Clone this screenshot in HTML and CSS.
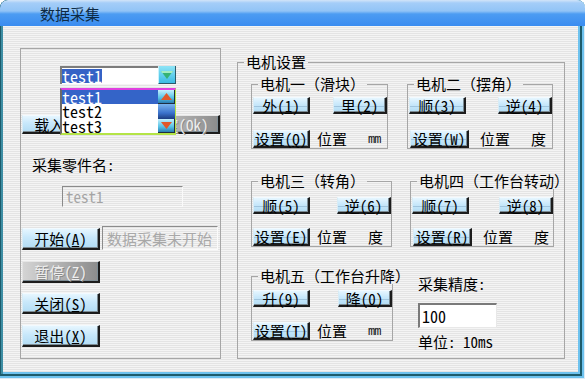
FILE: index.html
```
<!DOCTYPE html>
<html lang="zh-CN">
<head>
<meta charset="utf-8">
<title>数据采集</title>
<link rel="stylesheet" href="styles.css">
</head>
<body>
<div class="window">
  <div class="titlebar"><span class="title">数据采集</span></div>
  <div class="client">
    <div class="panel-left">
      <div class="combo">
        <div class="combo-field"><span class="sel">test1</span></div>
        <div class="combo-btn">
          <svg width="14" height="10" viewBox="0 0 14 10"><polygon points="1,1 13,1 7,9" fill="#36b274"/><polygon points="1,1 13,1 12,3 2,3" fill="#a4ecc0"/></svg>
        </div>
        <div class="dropdown">
          <ul class="items">
            <li class="on">test1</li>
            <li>test2</li>
            <li>test3</li>
          </ul>
          <div class="vscroll">
            <div class="sb-btn"><svg width="11" height="7" viewBox="0 0 11 7"><polygon points="5.5,0 11,7 0,7" fill="#e0582a"/></svg></div>
            <div class="sb-thumb"></div>
            <div class="sb-btn"><svg width="11" height="7" viewBox="0 0 11 7"><polygon points="0,0 11,0 5.5,7" fill="#e0582a"/></svg></div>
          </div>
        </div>
      </div>
      <div class="row-load">
        <button class="btn btn-l btn-load">载入(<u>L</u>)</button>
        <button class="btn btn-l btn-off btn-ok">确定(Ok)</button>
      </div>
      <div class="lbl-part">采集零件名:</div>
      <div class="field">test1</div>
      <div class="row-start">
        <button class="btn btn-l">开始(<u>A</u>)</button>
        <div class="status">数据采集未开始</div>
      </div>
      <button class="btn btn-l btn-off sp-pause">暂停(<u>Z</u>)</button>
      <button class="btn btn-l sp-close">关闭(<u>S</u>)</button>
      <button class="btn btn-l sp-exit">退出(<u>X</u>)</button>
    </div>

    <fieldset class="panel-right">
      <legend>电机设置</legend>
      <div class="motors">
        <div class="mrow r1">
          <fieldset class="motor g1">
            <legend>电机一（滑块）</legend>
            <div class="mb1"><button class="btn mbtn">外(<u>1</u>)</button><button class="btn mbtn rt">里(<u>2</u>)</button></div>
            <div class="mb2"><button class="btn mbtn set">设置(<u>Q</u>)</button><span class="pos">位置</span><span class="unit mm">mm</span></div>
          </fieldset>
          <fieldset class="motor g2 c2">
            <legend>电机二（摆角）</legend>
            <div class="mb1"><button class="btn mbtn">顺(<u>3</u>)</button><button class="btn mbtn rt">逆(<u>4</u>)</button></div>
            <div class="mb2"><button class="btn mbtn set">设置(<u>W</u>)</button><span class="pos">位置</span><span class="unit">度</span></div>
          </fieldset>
        </div>
        <div class="mrow r2">
          <fieldset class="motor g3">
            <legend>电机三（转角）</legend>
            <div class="mb1"><button class="btn mbtn">顺(<u>5</u>)</button><button class="btn mbtn rt">逆(<u>6</u>)</button></div>
            <div class="mb2"><button class="btn mbtn set">设置(<u>E</u>)</button><span class="pos">位置</span><span class="unit">度</span></div>
          </fieldset>
          <fieldset class="motor g4 c2">
            <legend>电机四（工作台转动）</legend>
            <div class="mb1"><button class="btn mbtn">顺(<u>7</u>)</button><button class="btn mbtn rt">逆(<u>8</u>)</button></div>
            <div class="mb2"><button class="btn mbtn set">设置(<u>R</u>)</button><span class="pos">位置</span><span class="unit">度</span></div>
          </fieldset>
        </div>
        <div class="mrow r3">
          <fieldset class="motor g5">
            <legend>电机五（工作台升降）</legend>
            <div class="mb1"><button class="btn mbtn">升(<u>9</u>)</button><button class="btn mbtn rt">降(<u>0</u>)</button></div>
            <div class="mb2"><button class="btn mbtn set">设置(<u>T</u>)</button><span class="pos">位置</span><span class="unit mm">mm</span></div>
          </fieldset>
          <div class="precision">
            <div class="p-label">采集精度:</div>
            <div class="p-input">100</div>
            <div class="p-unit">单位: 10ms</div>
          </div>
        </div>
      </div>
    </fieldset>
  </div>
</div>
</body>
</html>
```

FILE: styles.css
```
* { box-sizing: border-box; }
html, body { margin: 0; padding: 0; }
body {
  width: 585px;
  height: 379px;
  overflow: hidden;
  background: #ffffff;
  color: #000;
  font-family: "Noto Sans Mono CJK SC", "Noto Sans CJK SC", sans-serif;
  font-size: 15px;
  line-height: 1;
}

.window {
  width: 585px;
  height: 379px;
  display: flex;
  flex-direction: column;
  border-radius: 8px 8px 0 0;
  overflow: hidden;
  background: #6ec2ee;
  box-shadow:
    inset -1px -1px 0 #dcecf6,
    inset -3px -3px 0 #6ec2ee,
    inset -5px -5px 0 #1d5c6c,
    inset 1px 0 0 #1d5c6c,
    inset 3px 0 0 #3e8ea4;
}

.titlebar {
  flex: none;
  height: 26px;
  border-radius: 8px 8px 0 0;
  background: linear-gradient(#d2e4f8 0, #a4cdf8 3px, #92c4f6 11px, #4c9cf2 14px, #3a8cf0 100%);
  display: flex;
  align-items: center;
  padding-left: 40px;
}
.title {
  font-size: 15px;
  line-height: 16px;
  color: #0e2a44;
  margin-top: 1px;
}

.client {
  flex: none;
  width: 575px;
  height: 346px;
  margin-left: 3px;
  background: repeating-linear-gradient(to bottom, #f4f4f4 0, #f4f4f4 1px, #e4e4e4 1px, #e4e4e4 2px);
  display: flex;
  align-items: flex-start;
  padding: 22px 0 0 17px;
}

u { text-decoration: underline; text-underline-offset: 1px; }

/* ---------- buttons ---------- */
.btn {
  font: inherit;
  color: #000;
  margin: 0;
  padding: 0;
  display: flex;
  align-items: center;
  justify-content: center;
  white-space: nowrap;
  background: linear-gradient(#e6f6ff 0%, #c8e8fb 45%, #b2dcf4 100%);
  border: 0;
  border-left: 1px solid #d8ecf6;
  border-top: 1px solid #f2faff;
  border-right: 2px solid #1c1c1c;
  border-bottom: 2px solid #1c1c1c;
  box-shadow: inset -1px -1px 0 #7d8c94;
}
.btn-l { width: 78px; height: 22px; margin-left: 1px; flex: none; }
.btn-off {
  background: linear-gradient(to right, #d4d4d4, #8c8c8c);
  color: #eeeeee;
  text-shadow: 1px 1px 0 #8a8a8a;
  border-left-color: #e2e2e2;
  border-top-color: #e6e6e6;
}

/* ---------- left panel ---------- */
.panel-left {
  flex: none;
  width: 201px;
  height: 311px;
  border: 1px solid #a6a6a6;
  display: flex;
  flex-direction: column;
  align-items: flex-start;
}

.combo {
  position: relative;
  margin: 17px 0 0 39px;
  width: 116px;
  height: 18px;
  display: flex;
}
.combo-field {
  flex: 1;
  background: #fff;
  border-top: 2px solid #7c7c7c;
  border-left: 2px solid #7c7c7c;
  display: flex;
  align-items: center;
}
.sel {
  background: #3562c6;
  color: #fff;
  font-size: 16px;
  line-height: 14px;
  height: 14px;
}
.combo-btn {
  flex: none;
  width: 18px;
  height: 18px;
  background: linear-gradient(#8ee4f6, #3cbce4);
  border-right: 1px solid #2a5a6a;
  border-bottom: 1px solid #2a5a6a;
  border-left: 1px solid #c8f2fc;
  display: flex;
  align-items: center;
  justify-content: center;
}

.dropdown {
  position: absolute;
  left: 0;
  top: 22px;
  width: 116px;
  height: 47px;
  z-index: 2;
  display: flex;
  background: #fff;
  border-top: 2px solid #e040e0;
  border-left: 2px solid #6a6a6a;
  border-right: 1px solid #b4e446;
  border-bottom: 2px solid #b4e446;
}
.items {
  list-style: none;
  margin: 0;
  padding: 0;
  flex: 1;
}
.items li {
  height: 14.3px;
  line-height: 14px;
  font-size: 16px;
}
.items li.on { background: #3464c8; color: #fff; }
.vscroll {
  flex: none;
  width: 17px;
  display: flex;
  flex-direction: column;
}
.sb-btn {
  height: 14px;
  display: flex;
  align-items: center;
  justify-content: center;
  background: linear-gradient(#c6f0fc, #56c2e6 60%, #2a7cb0);
  border-right: 1px solid #1e2e40;
  border-bottom: 1px solid #1e2e40;
}
.sb-thumb {
  flex: 1;
  background: linear-gradient(#7ab4ee, #3a72cc 60%, #1c3c80);
}

.row-load {
  margin-top: 31px;
  width: 100%;
  display: flex;
}
.btn-load { height: 19px; }
.btn-ok { height: 19px; width: 82px; margin-left: auto; }

.lbl-part {
  margin: 23px 0 0 11px;
  line-height: 16px;
}
.field {
  margin: 13px 0 0 41px;
  width: 121px;
  height: 21px;
  border-top: 1px solid #8a8a8a;
  border-left: 1px solid #8a8a8a;
  border-right: 1px solid #fafafa;
  border-bottom: 1px solid #fafafa;
  color: #a4a4a4;
  padding-left: 3px;
  display: flex;
  align-items: center;
}

.row-start {
  margin-top: 19px;
  display: flex;
  align-items: flex-end;
}
.status {
  margin-left: 2px;
  width: 116px;
  height: 24px;
  border-top: 1px solid #8c8c8c;
  border-left: 1px solid #8c8c8c;
  border-right: 1px solid #fafafa;
  border-bottom: 1px solid #fafafa;
  color: #a8a8a8;
  padding-left: 4px;
  display: flex;
  align-items: center;
  white-space: nowrap;
  overflow: hidden;
}
.sp-pause { margin-top: 11px; }
.sp-close { margin-top: 10px; height: 21px; }
.sp-exit { margin-top: 11px; }

/* ---------- right panel ---------- */
fieldset {
  margin: 0;
  padding: 0;
  min-inline-size: 0;
  border: 1px solid #a6a6a6;
}
legend {
  margin-left: 6px;
  padding: 0 2px;
  height: 16px;
  line-height: 16px;
  font-size: 15px;
  white-space: nowrap;
}
.panel-right {
  flex: none;
  margin: 6px 0 0 16px;
  width: 328px;
  height: 305px;
}
.motors {
  margin: 6px 0 0 13px;
  display: flex;
  flex-direction: column;
}
.mrow { display: flex; align-items: flex-start; }
.r2 { margin-top: 24px; }
.r3 { margin-top: 21px; }

.g1 { width: 137px; }
.g2 { width: 146px; margin-left: 19px; }
.g3 { width: 141px; }
.g4 { width: 144px; margin-left: 18px; }
.g5 { width: 142px; }

.r1 .motor { padding-top: 5px; }
.r2 .motor { padding-top: 8px; }
.r3 .motor { padding-top: 6px; }
.r1 .mb2 { margin-top: 16px; }
.r2 .mb2 { margin-top: 14px; }
.r3 .mb2 { margin-top: 15px; }

.mb1 {
  display: flex;
  justify-content: space-between;
  padding-left: 1px;
}
.mb2 {
  display: flex;
  align-items: center;
}
.mbtn {
  width: 57px;
  height: 17px;
  background:
    linear-gradient(transparent 8px, rgba(120, 160, 190, 0.45) 8px, rgba(120, 160, 190, 0.45) 9px, transparent 9px),
    linear-gradient(#e6f6ff 0%, #c8e8fb 45%, #b2dcf4 100%);
}
.mbtn.rt { width: 54px; }
.mbtn.set { height: 18px; margin-left: 1px; }
.c2 .mbtn.set { width: 59px; margin-left: 2px; }
.pos { margin-left: 7px; line-height: 16px; }
.c2 .pos { margin-left: 11px; }
.unit { margin-left: 21px; line-height: 16px; color: #000; }
.unit.mm {
  font-family: "Liberation Mono", monospace;
  font-size: 12px;
  letter-spacing: -1px;
  color: #111;
  margin-top: 2px;
}

.precision {
  margin-left: 25px;
  padding-top: 8px;
}
.p-label { line-height: 16px; }
.p-input {
  margin-top: 11px;
  width: 79px;
  height: 25px;
  background: #fff;
  border-top: 2px solid #7a7a7a;
  border-left: 2px solid #7a7a7a;
  border-right: 1px solid #e8e8e8;
  border-bottom: 1px solid #e8e8e8;
  font-size: 16px;
  padding-left: 2px;
  display: flex;
  align-items: center;
}
.p-unit {
  margin-top: 6px;
  line-height: 16px;
  white-space: nowrap;
}
```
